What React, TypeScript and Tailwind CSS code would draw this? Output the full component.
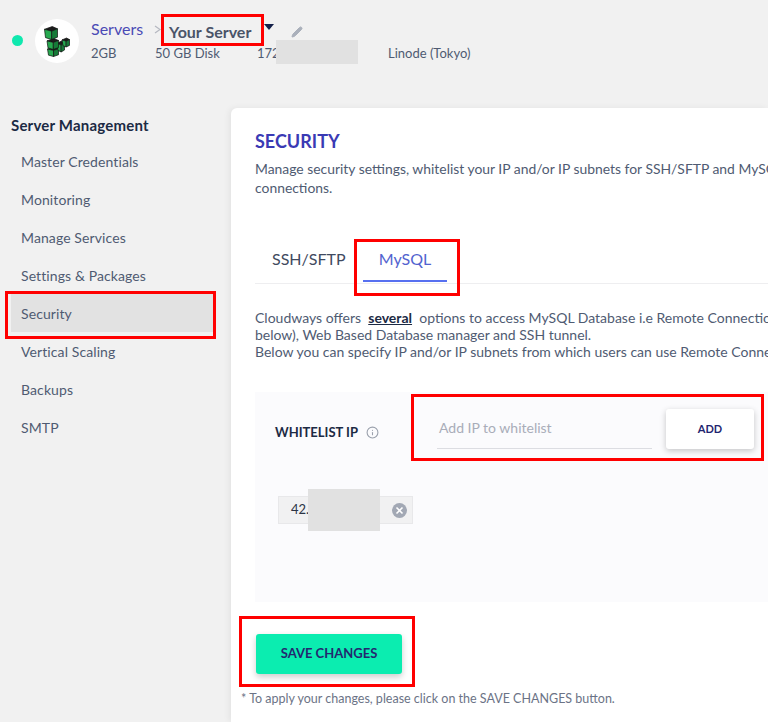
import { Info, Pencil } from "lucide-react";

const menu = [
  "Master Credentials",
  "Monitoring",
  "Manage Services",
  "Settings & Packages",
  "Security",
  "Vertical Scaling",
  "Backups",
  "SMTP",
];

// one block of the logo: dark top, two green sides
function Cube({ x, y, w, h }: { x: number; y: number; w: number; h: number }) {
  const t = h * 0.36;
  const m = x + w * 0.55;
  return (
    <g stroke="#111" strokeWidth="0.7">
      <path d={`M${x} ${y + t * 0.6} L${x + w * 0.6} ${y} L${x + w} ${y + t * 0.5} L${m} ${y + t} Z`} fill="#1c1c1c" />
      <path d={`M${x} ${y + t * 0.6} L${m} ${y + t} L${m} ${y + h} L${x + 1} ${y + h - t * 0.4} Z`} fill="#26a94f" />
      <path d={`M${m} ${y + t} L${x + w} ${y + t * 0.5} L${x + w} ${y + h - t * 0.5} L${m} ${y + h} Z`} fill="#167a38" />
    </g>
  );
}

function LinodeLogo() {
  return (
    <svg width="26" height="31" viewBox="0 0 26 31">
      <Cube x={3.5} y={21} w={11} h={9.5} />
      <Cube x={13} y={15} w={7.5} h={11} />
      <Cube x={18} y={12} w={7.5} h={9} />
      <Cube x={3} y={12.5} w={11.5} h={11} />
      <Cube x={0.5} y={0.5} w={13} h={13} />
    </svg>
  );
}

function Mark({ className }: { className: string }) {
  return <div className={`pointer-events-none absolute border-[3px] border-[#ff0000] ${className}`} />;
}

export default function App() {
  return (
    <div className="relative h-[722px] w-[768px] overflow-hidden bg-[#f1f1f1] font-['Lato','Open_Sans',sans-serif] text-[#4f5b72]">
      {/* server header */}
      <header className="flex h-[108px] items-start pl-[12px] pt-[19px]">
        <span className="mt-[16px] h-[11px] w-[11px] rounded-full bg-[#0fe8ae]" />
        <div className="ml-[12px] flex h-[44px] w-[44px] items-center justify-center rounded-full bg-white">
          <LinodeLogo />
        </div>
        <div className="ml-[12px]">
          <div className="flex h-[24px] items-center">
            <span className="mb-[5px] text-[16px] text-[#4a4ab5]">Servers</span>
            <svg className="mb-[3px] ml-[11px]" width="7" height="9" viewBox="0 0 7 9" fill="none">
              <path d="M1 1 L6 4.5 L1 8" stroke="#b5b8c0" strokeWidth="1.2" />
            </svg>
            <span className="ml-[8px] mt-[2px] text-[16px] font-bold text-[#4a5468]">Your Server</span>
            <span className="mb-[9px] ml-[13px] h-0 w-0 border-x-[5px] border-t-[6px] border-x-transparent border-t-[#14204a]" />
            <Pencil className="ml-[17px] mt-[1px] h-[12px] w-[12px] fill-[#aab0bb] text-[#aab0bb]" />
          </div>
          <div className="flex text-[13px] leading-[20px]">
            <span className="w-[64px]">2GB</span>
            <span className="w-[102px]">50 GB Disk</span>
            <span className="w-[131px]">172</span>
            <span>Linode (Tokyo)</span>
          </div>
        </div>
      </header>

      <div className="flex items-start">
        {/* sidebar */}
        <aside className="w-[231px] shrink-0 pl-[11px] pr-[18px]">
          <h2 className="mt-[7px] text-[15px] font-bold leading-[20px] tracking-[0.2px] text-[#1c2a44]">Server Management</h2>
          <ul className="mt-[7px]">
            {menu.map((item) => (
              <li
                key={item}
                className={`flex h-[38px] items-center pl-[10px] text-[14px] tracking-[0.1px] ${item === "Security" ? "bg-[#e2e2e2]" : ""}`}
              >
                {item}
              </li>
            ))}
          </ul>
        </aside>

        {/* security card */}
        <main className="h-[614px] flex-1 overflow-hidden rounded-tl-[6px] bg-white pl-[24px] pt-[22px] shadow-[-2px_0_6px_rgba(0,0,0,0.06)]">
          <h1 className="text-[18px] font-bold leading-[22px] text-[#3a3ab4]">SECURITY</h1>
          <p className="mt-[7px] w-[560px] text-[13.9px] leading-[19px]">
            Manage security settings, whitelist your IP and/or IP subnets for SSH/SFTP and MySQL
            <br />
            connections.
          </p>

          <div className="mt-[32px] flex h-[55px] border-b border-[#eeeef0] pl-[8px]">
            <div className="flex h-[54px] w-[100px] items-start pl-[9px] pt-[18px] text-[16px] text-[#3f4a60]">SSH/SFTP</div>
            <div className="flex h-[53px] w-[84px] items-start justify-center border-b-2 border-[#5770f0] pt-[18px] text-[16px] text-[#5263cf]">
              MySQL
            </div>
          </div>

          <div className="mt-[25px] w-[560px] whitespace-nowrap text-[14px] leading-[17px]">
            <p>
              Cloudways offers&nbsp; <span className="font-bold text-[#1c2a44] underline">several</span>&nbsp; options to access MySQL Database i.e Remote Connection
            </p>
            <p>below), Web Based Database manager and SSH tunnel.</p>
            <p>Below you can specify IP and/or IP subnets from which users can use Remote Connections</p>
          </div>

          {/* whitelist panel */}
          <section className="mt-[32px] h-[210px] bg-[#fbfbfd]">
            <div className="flex items-start pl-[20px] pt-[17px]">
              <div className="mt-[14px] flex w-[162px] items-center text-[13px] font-bold text-[#1c2a44]">
                WHITELIST IP
                <Info className="ml-[8px] h-[13px] w-[13px] text-[#9aa0ac]" />
              </div>
              <div className="h-[40px] w-[215px] border-b border-[#dcdde2] pl-[2px] text-[14px] leading-[38px] text-[#a9adb9]">
                Add IP to whitelist
              </div>
              <button className="ml-[14px] h-[40px] w-[88px] rounded-[3px] bg-white text-[11px] font-bold text-[#1f2570] shadow-[0_2px_6px_rgba(0,0,0,0.22)]">
                ADD
              </button>
            </div>
            <div className="ml-[23px] mt-[47px] flex h-[28px] w-[135px] items-center justify-between border border-[#e8e8ea] bg-[#f1f1f2] pl-[12px] pr-[5px] text-[13px] text-[#2c3446]">
              <span>42.</span>
              <svg width="15" height="15" viewBox="0 0 15 15">
                <circle cx="7.5" cy="7.5" r="7.5" fill="#a2a8b4" />
                <path d="M4.5 4.5 L10.5 10.5 M10.5 4.5 L4.5 10.5" stroke="#fff" strokeWidth="1.6" />
              </svg>
            </div>
          </section>

          <button className="ml-px mt-[32px] h-[40px] w-[146px] rounded-[3px] bg-[#0bedb0] text-[13px] font-bold text-[#23286f] shadow-[0_3px_6px_rgba(0,0,0,0.2)]">
            SAVE CHANGES
          </button>
          <p className="-ml-[14px] mt-[17px] text-[12.5px] leading-[16px] text-[#6b7386]">
            * To apply your changes, please click on the SAVE CHANGES button.
          </p>
        </main>
      </div>

      {/* redaction blocks */}
      <div className="absolute left-[276px] top-[40px] h-[24px] w-[82px] bg-[#e1e1e1]" />
      <div className="absolute left-[308px] top-[489px] h-[42px] w-[72px] bg-[#e1e1e1]" />

      {/* annotations */}
      <Mark className="left-[161px] top-[14px] h-[32px] w-[103px]" />
      <Mark className="left-[5px] top-[291px] h-[48px] w-[211px]" />
      <Mark className="left-[354px] top-[239px] h-[57px] w-[106px]" />
      <Mark className="left-[411px] top-[394px] h-[67px] w-[353px]" />
      <Mark className="left-[239px] top-[616px] h-[71px] w-[176px]" />
    </div>
  );
}
